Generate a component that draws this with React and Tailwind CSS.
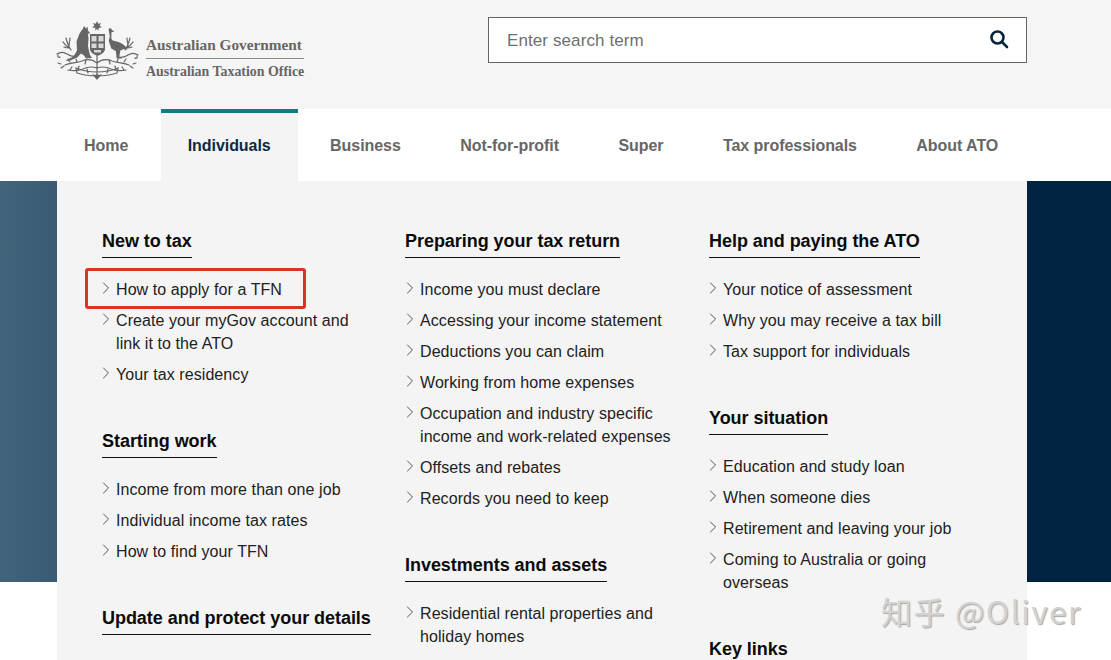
import React from 'react';
import { ChevronRight } from 'lucide-react';

const sans = "font-['Liberation_Sans',Arial,sans-serif]";

const navItems = ['Home', 'Individuals', 'Business', 'Not-for-profit', 'Super', 'Tax professionals', 'About ATO'];

const columns = [
    {
        width: 'w-[303px]',
        indent: '-ml-[6px]',
        sections: [
            { title: 'New to tax', links: ['How to apply for a TFN', 'Create your myGov account and link it to the ATO', 'Your tax residency'] },
            { title: 'Starting work', links: ['Income from more than one job', 'Individual income tax rates', 'How to find your TFN'] },
            { title: 'Update and protect your details', links: [] },
        ],
    },
    {
        width: 'w-[304px]',
        indent: '-ml-[5px]',
        sections: [
            {
                title: 'Preparing your tax return',
                links: [
                    'Income you must declare',
                    'Accessing your income statement',
                    'Deductions you can claim',
                    'Working from home expenses',
                    'Occupation and industry specific income and work-related expenses',
                    'Offsets and rebates',
                    'Records you need to keep',
                ],
            },
            { title: 'Investments and assets', links: ['Residential rental properties and holiday homes'] },
        ],
    },
    {
        width: 'w-[280px]',
        indent: '-ml-[6px]',
        sections: [
            { title: 'Help and paying the ATO', links: ['Your notice of assessment', 'Why you may receive a tax bill', 'Tax support for individuals'] },
            {
                title: 'Your situation',
                links: ['Education and study loan', 'When someone dies', 'Retirement and leaving your job', 'Coming to Australia or going overseas'],
            },
            { title: 'Key links', links: [] },
        ],
    },
];

// rough version of the coat of arms
const Crest = () => (
    <svg width="84" height="62" viewBox="0 0 84 62" className="shrink-0" fill="#666666">
        {/* star */}
        <path d="M41 1l1.200 2.800 2.800-.8-1.400 2.600 2.200 1.800-2.900.4-.5 2.900-1.400-2-1.400 2-.5-2.900-2.900-.4 2.200-1.800-1.400-2.600 2.800.8z" />
        {/* kangaroo */}
        <path d="M28 6l2 2.500 1.500-2 .5 4 2 2.500-2 1 .5 5-.5 7 1 5 1 4 2 3-6 .5-2-3-3-2-4 4-8 3.500-3.500-.5 8-4 3.500-6-.5-9 3-8 3.500-5z" />
        {/* emu */}
        <path d="M52.500 9c2-1.500 3.500-.5 3.300 1.200l2.700.8c-1 1-2.200 1-3 1.200l-.2 5.800c.2 2 1.500 2.800 3.500 3 5 .8 10 3.500 13 8.500l-4-.5-3.500 1.500-1 6.500 3 1.500h-5.500l-1-7.500-4.500-2.500-2.500-7.500 1-5z" />
        {/* shield */}
        <path d="M34 14h15v15c0 3-3 5-7.500 7-4.500-2-7.500-4-7.500-7z" />
        <path d="M35.500 16h5v5.500h-5zM42.500 16h5v5.500h-5zM35.500 23.500h5V28h-5zM42.500 23.500h5V28h-5zM38 30h7v2.500h-7z" fill="#d8d8d8" />
        <g fill="none" stroke="#666666" strokeWidth="1.200" strokeLinecap="round">
            {/* centre stem and main branches */}
            <path d="M41 36v19M41 43c-5-4-10-4-15-2-6 2-12 2-17 4M41 43c5-4 10-4 15-2 6 2 12 2 17 4M41 48c-6-2-10-1-14 1-5 2-10 2-15 1M41 48c6-2 10-1 14 1 5 2 10 2 15 1" />
            {/* side curls */}
            <path d="M1 34c3-2 7-2 10 0 3 2 7 3 11 2M2 35c-1 2 1 3 2 2M82 35c-3-2-7-2-10 0-3 2-7 3-11 2M81 36c1 2-1 3-2 2" />
            {/* leaves */}
            <path d="M5 44l-3-1M8 46l-3 2M14 42l-2-3M16 47l-2 3M21 42l-1-3M23 46l-1 4M29 44l1-4M31 49l1 4M77 44l3-1M74 46l3 2M68 42l2-3M66 47l2 3M61 42l1-3M59 46l1 4M54 44l-1-4M52 49l-1 4" />
            {/* wattle sprays */}
            <path d="M10 18c1 4 2 8 5 12M7 22c2 2 3 4 5 5M14 18c0 3-1 5-1 8M8 27c2 1 4 1 6 1M74 18c-1 4-2 8-5 12M77 22c-2 2-3 4-5 5M71 18c0 3 1 5 1 8M76 27c-2 1-4 1-6 1" />
        </g>
        {/* motto scroll */}
        <path d="M20 48c7 3 14 4 21 4s14-1 21-4l-1 5c-6 2-13 3-20 3s-14-1-20-3z" fill="none" stroke="#666666" strokeWidth="1.200" />
        <path d="M36 54l5 6 5-6-3 1-2-1-2 1z" />
    </svg>
);

const MenuLink = ({ text, indent, highlight }) => (
    <li className={`relative ${indent} flex w-[274px] items-start text-[16px] leading-[23px] tracking-[0.08px] text-[#212121]`}>
        <ChevronRight size={20} strokeWidth={1.2} className="shrink-0 text-[#555555]" />
        <span>{text}</span>
        {highlight && (
            <span className="absolute -top-[10px] -left-[11px] h-[41px] w-[221px] rounded-[3px] border-[3px] border-[#d9342b]" />
        )}
    </li>
);

const MenuSection = ({ title, links, indent }) => (
    <div className="mb-[42px]">
        <h2 className="w-fit border-b border-[#111111] pb-[3px] text-[18px] leading-[26px] font-bold tracking-[-0.04px] text-[#0b0b0b]">{title}</h2>
        {links.length > 0 && (
            <ul className="mt-[20px] flex flex-col gap-[8px]">
                {links.map((text) => (
                    <MenuLink key={text} text={text} indent={indent} highlight={text === 'How to apply for a TFN'} />
                ))}
            </ul>
        )}
    </div>
);

export default function App() {
    return (
        <div className={`relative h-[660px] overflow-hidden bg-white ${sans}`}>
            <header className="flex h-[109px] bg-[#f5f5f5]">
                <div className="ml-[56px] flex h-fit w-[432px] items-start pt-[20px]">
                    <Crest />
                    <div className="mt-[15px] ml-[6px] w-fit font-['Liberation_Serif',serif] font-bold text-[#666666]">
                        <div className="border-b border-[#8a8a8a] pb-[3px] text-[15.300px] leading-[20px]">Australian Government</div>
                        <div className="pt-[2px] text-[13.900px] leading-[21px] whitespace-nowrap">Australian Taxation Office</div>
                    </div>
                </div>
                <div className="mt-[17px] flex h-[46px] w-[539px] items-center justify-between border border-[#666666] bg-white pr-[17px] pl-[18px]">
                    <span className="pt-[1px] text-[17px] tracking-[0.1px] text-[#6f6f6f]">Enter search term</span>
                    <svg width="20" height="20" viewBox="0 0 20 20" fill="none" stroke="#07263c" strokeWidth="2.600" strokeLinecap="round" className="-mt-[2px]">
                        <circle cx="8.500" cy="8.500" r="6" />
                        <path d="M13 13l5 5" />
                    </svg>
                </div>
            </header>

            <nav className="flex h-[72px] gap-[59.400px] bg-white pl-[84px] text-[16px] font-bold tracking-[-0.05px] text-[#666666]">
                {navItems.map((item) =>
                    item === 'Individuals' ? (
                        <div key={item} className="-mx-[27px] flex items-center border-t-4 border-[#137a7f] bg-[#f4f4f4] px-[27px] pb-[2px] text-[#0b2a45]">
                            {item}
                        </div>
                    ) : (
                        <div key={item} className="flex items-center pt-[2px]">
                            {item}
                        </div>
                    )
                )}
            </nav>

            <div className="flex h-[479px]">
                <div className="h-[401px] w-[57px] bg-gradient-to-r from-[#41647b] to-[#3a5b73]" />
                <main className="flex w-[970px] bg-[#f4f4f4] pt-[47px] pl-[45px]">
                    {columns.map((col) => (
                        <div key={col.sections[0].title} className={`${col.width} shrink-0`}>
                            {col.sections.map((section) => (
                                <MenuSection key={section.title} title={section.title} links={section.links} indent={col.indent} />
                            ))}
                        </div>
                    ))}
                </main>
                <div className="h-[401px] flex-1 bg-[#00233f]" />
            </div>

            {/* site watermark */}
            <div className="absolute top-[589px] left-[881px] font-['Noto_Sans_CJK_SC','Noto_Sans',sans-serif] text-[31px] leading-[44px] tracking-[1.700px] whitespace-nowrap text-[#d2d2d2] [text-shadow:1px_1px_1px_#a8a8a8]">
                知乎 @Oliver
            </div>
        </div>
    );
}
